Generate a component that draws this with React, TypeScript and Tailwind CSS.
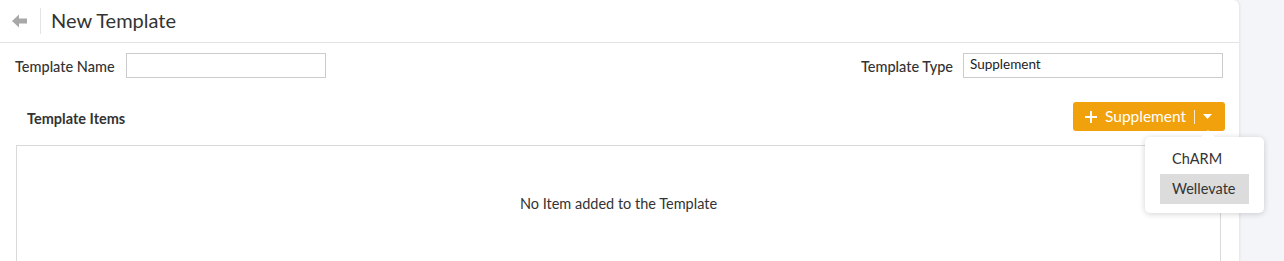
import { useState } from "react"

const font = { fontFamily: "Lato, 'Open Sans', sans-serif" }

function BackArrow() {
  return (
    <svg width="16" height="14" viewBox="0 0 16 14" className="text-[#a8a8a8]">
      <path d="M0 7 L7 0.5 L7 4.5 L15 4.5 L15 9.5 L7 9.5 L7 13.5 Z" fill="currentColor" />
    </svg>
  )
}

export default function App() {
  const [name, setName] = useState("")
  const [type, setType] = useState("Supplement")

  return (
    <div className="flex h-[261px] w-full overflow-hidden bg-[#f3f5f9] text-[#333]" style={font}>
      <div className="flex w-[1239px] shrink-0 flex-col rounded-tr-md bg-white shadow-[1px_0_3px_rgba(0,0,0,0.08)]">
        {/* Header */}
        <div className="flex h-[43px] shrink-0 items-center border-b border-[#e3e3e3] pl-[12px]">
          <BackArrow />
          <div className="ml-[12px] h-[26px] w-px bg-[#e3e3e3]" />
          <h1 className="mb-[2px] ml-[10px] text-[20px] text-[#333]">New Template</h1>
        </div>

        {/* Fields */}
        <div className="flex items-center justify-between pl-[15px] pr-[16px] pt-[10px]">
          <div className="flex items-center">
            <label className="pt-[2px] text-[14.5px] font-medium text-[#333]">Template Name</label>
            <input
              value={name}
              onChange={(e) => setName(e.target.value)}
              className="ml-[11px] h-[25px] w-[200px] border border-[#ccc] px-[6px] text-[14px] outline-none"
            />
          </div>
          <div className="flex items-center">
            <label className="pt-[2px] text-[14.5px] font-medium text-[#333]">Template Type</label>
            <input
              value={type}
              onChange={(e) => setType(e.target.value)}
              className="ml-[10px] h-[25px] w-[260px] border border-[#ccc] px-[6px] pb-[3px] text-[13.5px] text-[#222] outline-none"
            />
          </div>
        </div>

        {/* Items header */}
        <div className="relative flex items-center justify-between pl-[27px] pr-[14px] pt-[24px]">
          <span className="pt-[4px] text-[14.5px] font-bold text-[#333]">Template Items</span>
          <button className="flex h-[29px] w-[152px] items-center rounded-[3px] bg-[#f1a10b] pl-[12px] text-[15.5px] text-white">
            <svg width="12" height="12" viewBox="0 0 12 12">
              <path d="M6 0 V12 M0 6 H12" stroke="white" strokeWidth="2" />
            </svg>
            <span className="ml-[8px]">Supplement</span>
            <span className="ml-[8px] h-[14px] w-px bg-white/80" />
            <svg width="9" height="5" viewBox="0 0 9 5" className="ml-[8px]">
              <path d="M0 0 L9 0 L4.5 5 Z" fill="white" />
            </svg>
          </button>

          {/* Dropdown */}
          <div className="absolute right-[-25px] top-[59px] z-10 w-[119px] rounded-[5px] bg-white px-[15px] pb-[9px] pt-[8px] shadow-[0_1px_6px_rgba(0,0,0,0.18)]">
            <div className="absolute -top-[5px] left-[58px] h-[10px] w-[10px] rotate-45 bg-white" />
            <div className="relative px-[12px] py-[3px] text-[14.5px] text-[#333]">ChARM</div>
            <div className="relative mt-[1px] bg-[#dcdcdc] px-[12px] py-[4px] text-[14.5px] text-[#333]">Wellevate</div>
          </div>
        </div>

        {/* Items box */}
        <div className="ml-[16px] mr-[18px] mt-[14px] flex flex-1 justify-center border border-b-0 border-[#d9d9d9] pt-[47px]">
          <span className="text-[14.5px] text-[#333]">No Item added to the Template</span>
        </div>
      </div>
    </div>
  )
}
